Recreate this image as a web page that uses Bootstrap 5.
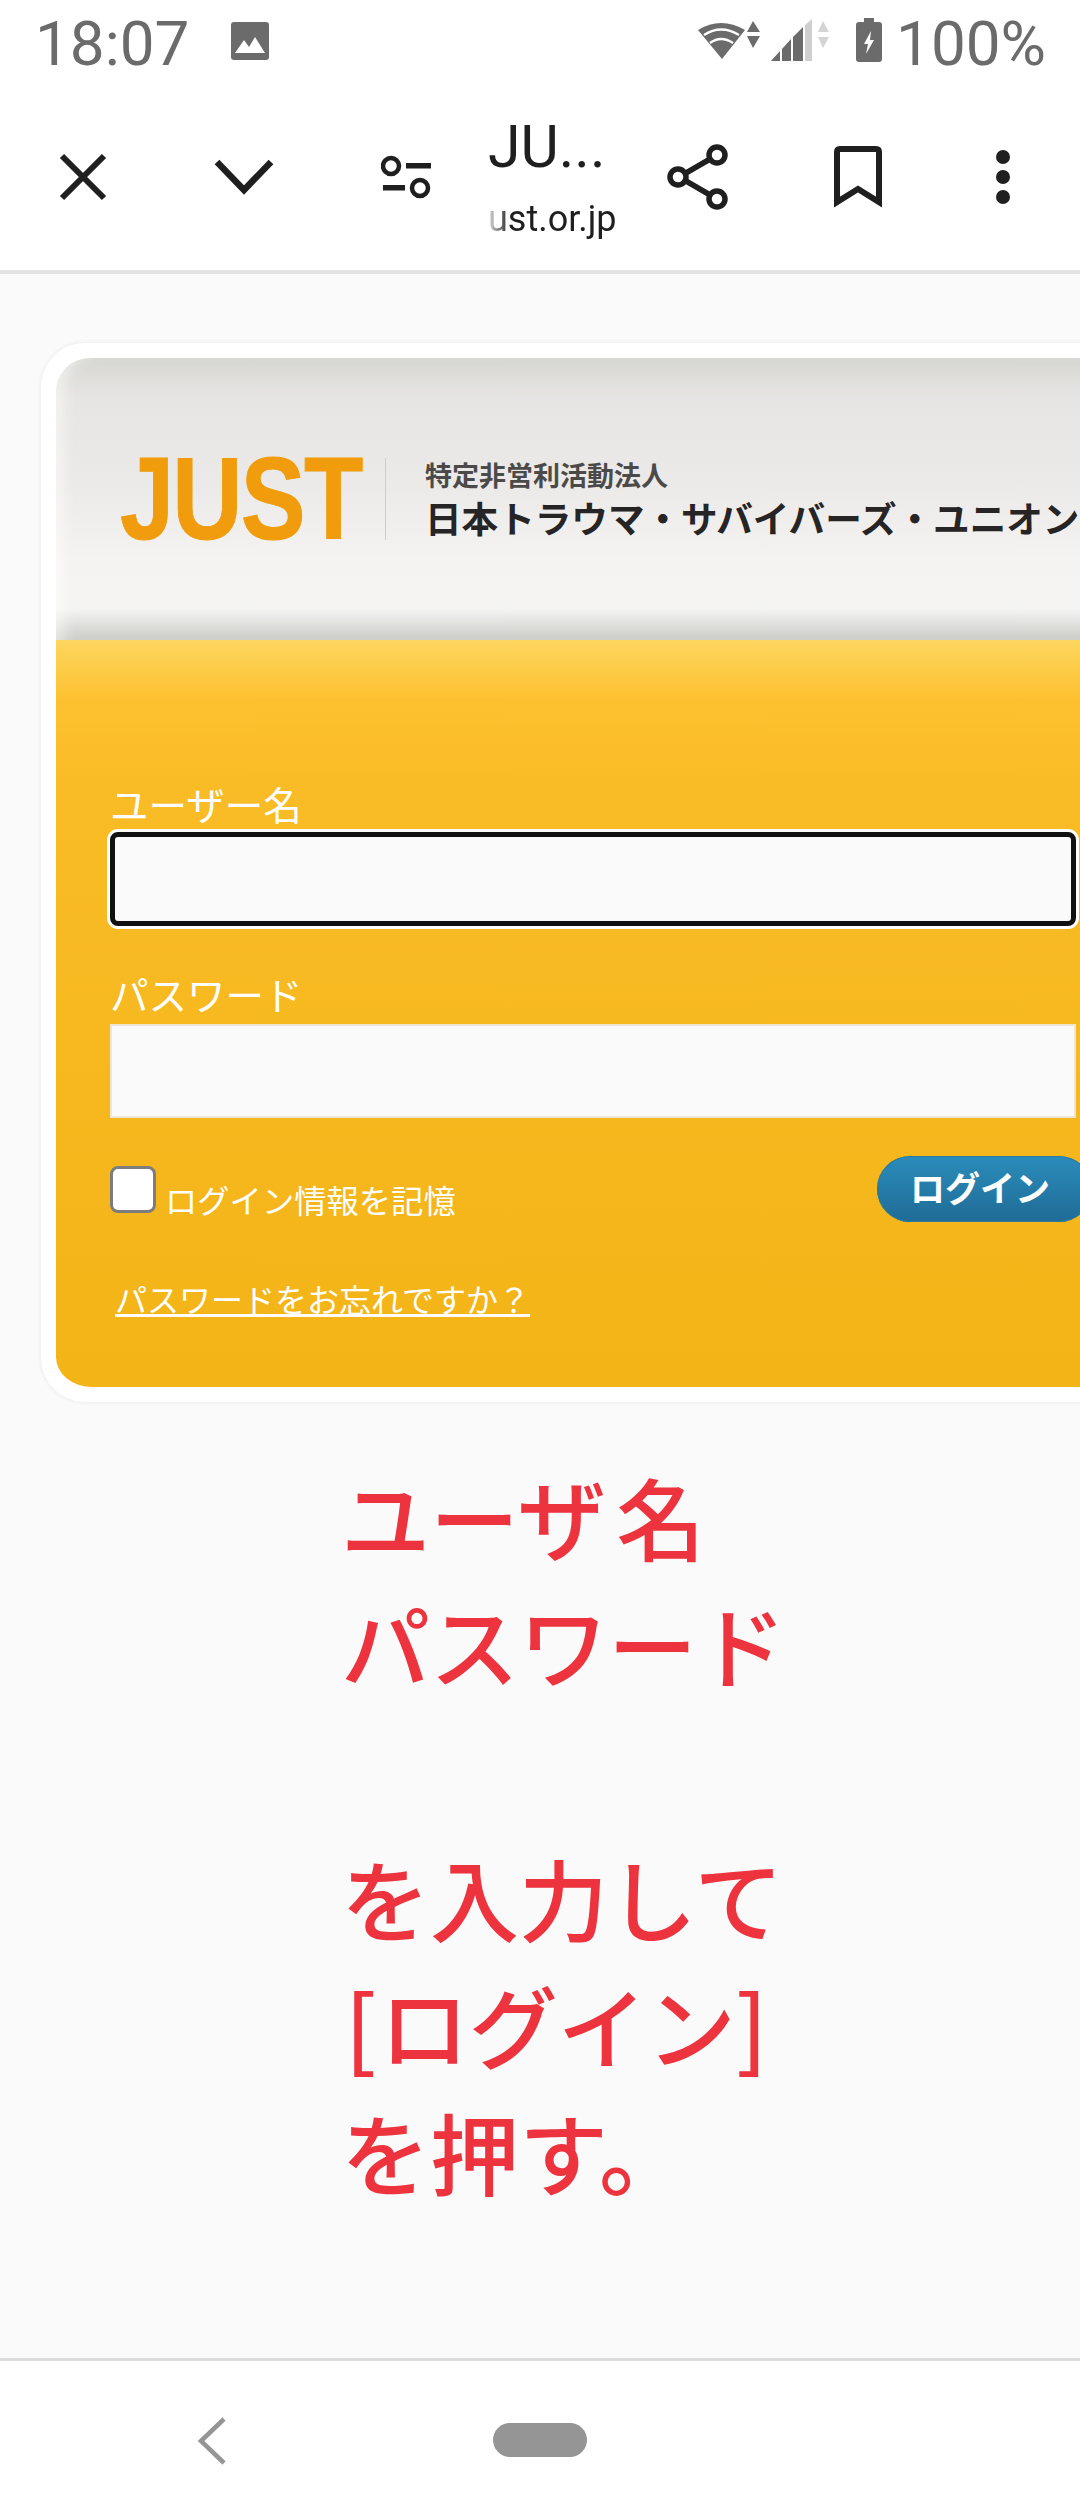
<!DOCTYPE html>
<html lang="ja">
<head>
    <meta charset="UTF-8">
    <meta name="viewport" content="width=device-width, initial-scale=1.0">
    <title>JUST ログイン</title>
    <link href="https://cdn.jsdelivr.net/npm/bootstrap@5.3.0/dist/css/bootstrap.min.css" rel="stylesheet">
    <script src="https://cdn.jsdelivr.net/npm/bootstrap@5.3.0/dist/js/bootstrap.bundle.min.js"></script>
    <style>
        html, body { height: 2520px; overflow: hidden; }
        body { background: #fff; font-family: Roboto, "Noto Sans CJK JP", sans-serif; color: #1f1f1f; }

        .status-bar { height: 84px; padding: 0 34px 0 35px; color: #6b6b6b; font-size: 62px; line-height: 87px; }
        .status-left svg { margin-left: 42px; }
        .status-right svg { display: block; }

        .tool-bar { height: 190px; border-bottom: 4px solid #e2e2e2; }
        .tool-cell { flex: 0 0 auto; }
        .tool-cell svg { display: block; }
        .cell-close { width: 161px; margin-left: 2px; }
        .cell-down { width: 161px; }
        .cell-tune { width: 164px; }
        .cell-title { width: 132px; height: 100%; }
        .cell-share { width: 155px; }
        .cell-save { width: 165px; }
        .cell-more { width: 125px; }
        .title-main { font-size: 59px; line-height: 60px; margin-top: 33px; }
        .title-host { font-size: 36px; line-height: 44px; margin-top: 20px; width: 127px; white-space: nowrap;
            -webkit-mask-image: linear-gradient(to right, rgba(0,0,0,.15), #000 22px); mask-image: linear-gradient(to right, rgba(0,0,0,.15), #000 22px); }

        .page-area { height: 2087px; background: #fafafa; padding: 69px 0 0 41px; overflow: hidden; border-bottom: 3px solid #dcdcdc; }
        .login-frame { width: 1100px; padding: 15px; background: #fff; border-radius: 44px 0 0 44px; box-shadow: 0 0 4px #e6e6e6; }
        .login-head { height: 282px; padding-left: 64px; border-radius: 34px 0 0 0;
            background: linear-gradient(to bottom, #d6d6d2 0, #e6e5e3 14%, #eceae9 45%, #f5f3f2 72%, #f4f4f2 89%, #cbcbc8 100%);
            box-shadow: inset 16px 0 14px -8px rgba(255,255,255,.5); }
        .logo-word { width: 245px; height: 84px; flex: 0 0 auto; }
        .logo-glyphs { display: inline-block; font-family: "Liberation Sans", sans-serif; font-weight: 700; font-size: 117px; line-height: 84px; color: #f09c0c; white-space: nowrap; letter-spacing: -2px; transform: scaleX(.83); transform-origin: left center; -webkit-text-stroke: 1px #f09c0c; }
        .logo-rule { width: 1px; height: 82px; background: #cfcdcb; margin: 0 39px 0 20px; flex: 0 0 auto; }
        .logo-small { font-family: "Noto Sans CJK JP", sans-serif; font-size: 27px; line-height: 34px; font-weight: 700; color: #4b4a49; white-space: nowrap; }
        .logo-big { font-family: "Noto Sans CJK JP", sans-serif; font-size: 36.6px; line-height: 46px; font-weight: 700; color: #262424; white-space: nowrap; margin-top: 3px; }
        .login-body { padding: 140px 50px 70px 54px; border-radius: 0 0 0 36px / 0 0 0 30px; color: #fff; font-family: "Noto Sans CJK JP", sans-serif;
            background: linear-gradient(to bottom, #fdd65f 0, #fdc130 60px, #fabc26 140px, #f3b417 100%); }
        .field-label { display: block; font-size: 38.5px; line-height: 46px; margin: 0; }
        .field-input.form-control { height: 94px; border-radius: 8px; background: #fbfafa; }
        .field-user.form-control { margin-top: 6px; margin-bottom: 44px; border: 5px solid #111; box-shadow: 0 0 0 3px #fff; }
        .field-pass.form-control { margin-top: 8px; border: 2px solid #eee6d2; border-radius: 0; }
        .remember-row { margin-top: 38px; height: 66px; }
        .remember-box.form-check-input { width: 46px; height: 47px; margin: 10px 9px 0 0; border: 3px solid #7d7d7d; border-radius: 8px; background-color: #fff; }
        .remember-text { font-size: 32.3px; line-height: 38px; margin: 24px 0 0 0; }
        .login-btn.btn { width: 215px; height: 66px; margin-right: -16px; padding: 0 9px 4px 0; border: 0; border-radius: 33px; color: #fff; font-size: 35px; line-height: 62px; font-weight: 700;
            background: linear-gradient(to bottom, #2b8cbb, #1f6c96); box-shadow: inset 0 0 0 1px #2a7ba3; }
        .forgot-link { display: inline-block; margin: 57px 0 0 5px; font-size: 32px; line-height: 38px; color: #fff; }

        .note-text { margin: 50px 0 0 300px; font-family: "Noto Sans CJK JP", sans-serif; font-size: 89px; font-weight: 500; line-height: 127px; color: #ec333e; }
        .note-open { margin: 0 3px 0 4px; }
        .note-name { margin-left: 10px; }

        .nav-bar { height: 159px; background: #fff; }
        .nav-back { margin-left: 197px; }
        .nav-pill { width: 94px; height: 34px; margin-left: 266px; margin-top: -1px; border-radius: 17px; background: #959595; }
    </style>
</head>
<body>
    <!-- barra de estado -->
    <div class="status-bar d-flex justify-content-between">
        <div class="status-left d-flex align-items-start">
            <span>18:07</span>
            <svg width="38" height="38" viewBox="0 0 38 38" style="margin-top:22px">
                <rect width="38" height="38" rx="3" fill="#6b6b6b"/>
                <path d="M4 31 L13 18 L18 25 L24 15 L34 31 Z" fill="#fff"/>
            </svg>
        </div>
        <div class="status-right d-flex align-items-start">
            <svg width="64" height="40" viewBox="0 0 64 40" style="margin-top:21px">
                <path d="M0 9 Q23 -5 47 9 L24 38 Z" fill="#6b6b6b"/>
                <path d="M6 14 Q23 3 41 14 M12 22 Q23 14 35 22" fill="none" stroke="#fff" stroke-width="2.5"/>
                <path d="M55 0 L62 11 H49 Z M49 15 H62 L55 27 Z" fill="#6b6b6b"/>
            </svg>
            <svg width="64" height="44" viewBox="0 0 64 44" style="margin:19px 0 0 9px">
                <path d="M0 42 L9 32 V42 Z M11 30 L20 20 V42 H11 Z M22 18 L32 8 V42 H22 Z" fill="#6b6b6b"/>
                <path d="M34 6 L41 0 V42 H34 Z" fill="#cfcfcf"/>
                <path d="M52 2 L58 13 H47 Z M47 18 H58 L52 29 Z" fill="#d4d4d4"/>
            </svg>
            <svg width="26" height="44" viewBox="0 0 26 44" style="margin:18px 14px 0 21px">
                <path d="M8 0 H18 V4 H23 Q26 4 26 7 V41 Q26 44 23 44 H3 Q0 44 0 41 V7 Q0 4 3 4 H8 Z" fill="#6b6b6b"/>
                <path d="M15 13 L8 26 H12 L10 36 L18 22 H14 Z" fill="#fff"/>
            </svg>
            <span>100%</span>
        </div>
    </div>

    <!-- barra del navegador -->
    <div class="tool-bar d-flex align-items-center">
        <div class="tool-cell cell-close d-flex justify-content-center">
            <svg width="48" height="48" viewBox="0 0 48 48"><path d="M3 3 L45 45 M45 3 L3 45" stroke="#1f1f1f" stroke-width="6" fill="none"/></svg>
        </div>
        <div class="tool-cell cell-down d-flex justify-content-center">
            <svg width="60" height="36" viewBox="0 0 60 36"><path d="M3 3 L30 31 L57 3" stroke="#1f1f1f" stroke-width="6.5" fill="none"/></svg>
        </div>
        <div class="tool-cell cell-tune d-flex justify-content-center">
            <svg width="50" height="44" viewBox="0 0 50 44">
                <circle cx="10" cy="11" r="8" stroke="#1f1f1f" stroke-width="4.5" fill="none"/>
                <rect x="25" y="8" width="25" height="5.5" fill="#1f1f1f"/>
                <circle cx="39" cy="33" r="8" stroke="#1f1f1f" stroke-width="4.5" fill="none"/>
                <rect x="2" y="30" width="22" height="5.5" fill="#1f1f1f"/>
            </svg>
        </div>
        <div class="tool-cell cell-title">
            <div class="title-main">JU...</div>
            <div class="title-host">ust.or.jp</div>
        </div>
        <div class="tool-cell cell-share d-flex justify-content-center">
            <svg width="62" height="66" viewBox="0 0 62 66">
                <path d="M50 11 L12 33 L50 55" stroke="#1f1f1f" stroke-width="5.5" fill="none"/>
                <circle cx="50" cy="11" r="8" fill="#fff" stroke="#1f1f1f" stroke-width="5.5"/>
                <circle cx="11" cy="33" r="8" fill="#fff" stroke="#1f1f1f" stroke-width="5.5"/>
                <circle cx="50" cy="55" r="8" fill="#fff" stroke="#1f1f1f" stroke-width="5.5"/>
            </svg>
        </div>
        <div class="tool-cell cell-save d-flex justify-content-center">
            <svg width="48" height="62" viewBox="0 0 48 62"><path d="M3 6 Q3 3 6 3 H42 Q45 3 45 6 V56 L24 43 L3 56 Z" stroke="#1f1f1f" stroke-width="6" fill="none"/></svg>
        </div>
        <div class="tool-cell cell-more d-flex justify-content-center">
            <svg width="16" height="54" viewBox="0 0 16 54">
                <circle cx="8" cy="7" r="7" fill="#1f1f1f"/><circle cx="8" cy="27" r="7" fill="#1f1f1f"/><circle cx="8" cy="47" r="7" fill="#1f1f1f"/>
            </svg>
        </div>
    </div>

    <!-- contenido -->
    <div class="page-area">
        <div class="login-frame">
            <div class="login-head d-flex align-items-center">
                <div class="logo-word"><span class="logo-glyphs">JUST</span></div>
                <div class="logo-rule"></div>
                <div>
                    <div class="logo-small">特定非営利活動法人</div>
                    <div class="logo-big">日本トラウマ・サバイバーズ・ユニオン</div>
                </div>
            </div>
            <form class="login-body">
                <label class="field-label" for="usuario">ユーザー名</label>
                <input class="form-control field-input field-user" id="usuario" type="text">
                <label class="field-label" for="clave">パスワード</label>
                <input class="form-control field-input field-pass" id="clave" type="password">
                <div class="remember-row d-flex justify-content-between">
                    <div class="d-flex align-items-start">
                        <input class="form-check-input remember-box" id="recordar" type="checkbox">
                        <label class="remember-text" for="recordar">ログイン情報を記憶</label>
                    </div>
                    <button class="btn login-btn" type="button">ログイン</button>
                </div>
                <a class="forgot-link" href="#">パスワードをお忘れですか？</a>
            </form>
        </div>
        <p class="note-text">ユーザ<span class="note-name">名</span><br>パスワード<br><br>を入力して<br><span class="note-open">[</span>ログイン]<br>を押す。</p>
    </div>

    <!-- barra inferior -->
    <div class="nav-bar d-flex align-items-center">
        <svg class="nav-back" width="30" height="48" viewBox="0 0 30 48"><path d="M27 2 L4 24 L27 46" stroke="#959595" stroke-width="4.5" fill="none"/></svg>
        <div class="nav-pill"></div>
    </div>
</body>
</html>
